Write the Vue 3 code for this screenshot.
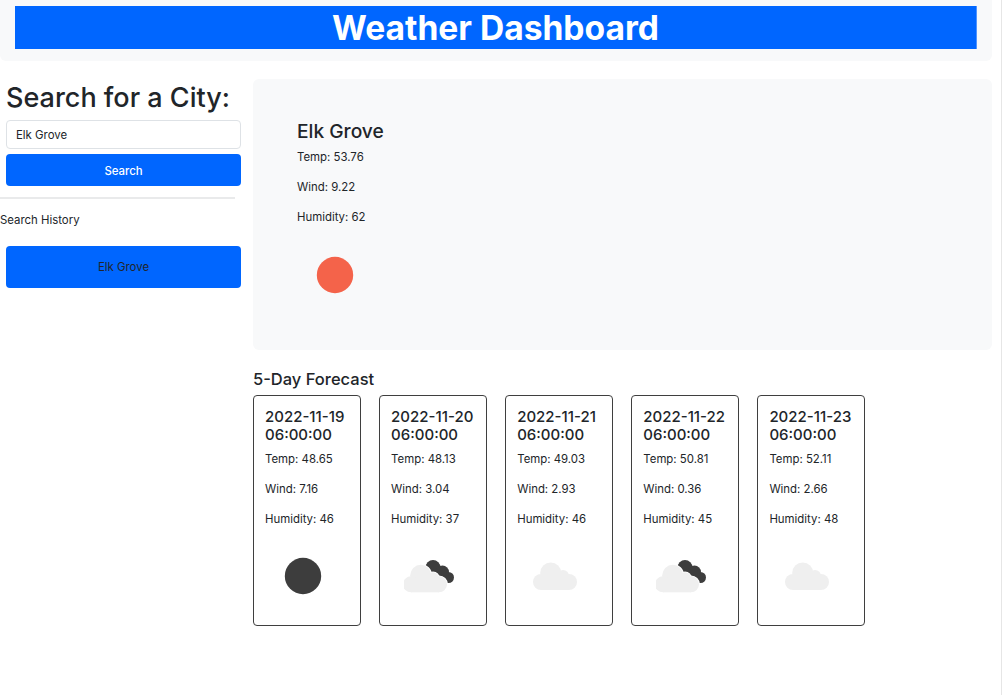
<script setup>
const today = { city: 'Elk Grove', temp: '53.76', wind: '9.22', humidity: '62' }

const days = [
  { date: '2022-11-19', temp: '48.65', wind: '7.16', humidity: '46', icon: 'moon' },
  { date: '2022-11-20', temp: '48.13', wind: '3.04', humidity: '37', icon: 'partly' },
  { date: '2022-11-21', temp: '49.03', wind: '2.93', humidity: '46', icon: 'cloud' },
  { date: '2022-11-22', temp: '50.81', wind: '0.36', humidity: '45', icon: 'partly' },
  { date: '2022-11-23', temp: '52.11', wind: '2.66', humidity: '48', icon: 'cloud' }
]

// same lobes for the plain cloud and the one in front of the dark cloud
const lobes = [
  { cx: 20.7, cy: 22, r: 10.5 },
  { cx: 33, cy: 25, r: 6 },
  { cx: 11, cy: 31, r: 8 },
  { cx: 39, cy: 31, r: 8 }
]
</script>

<template>
  <div class="page">
    <header class="top">
      <h1 class="title">Weather Dashboard</h1>
    </header>

    <div class="main">
      <aside class="side">
        <h2 class="side-title">Search for a City:</h2>
        <input class="city-input" type="text" value="Elk Grove" />
        <button class="btn search-btn">Search</button>
        <hr class="rule" />
        <p class="history-label">Search History</p>
        <button class="btn history-btn">Elk Grove</button>
      </aside>

      <section class="content">
        <div class="current">
          <h3 class="city">{{ today.city }}</h3>
          <p>Temp: {{ today.temp }}</p>
          <p>Wind: {{ today.wind }}</p>
          <p>Humidity: {{ today.humidity }}</p>
          <svg class="icon" viewBox="0 0 50 50" width="50" height="50">
            <circle cx="25" cy="25" r="18.2" fill="#f4634a" />
          </svg>
        </div>

        <h4 class="forecast-title">5-Day Forecast</h4>
        <div class="cards">
          <div v-for="day in days" :key="day.date" class="card">
            <h5 class="date">{{ day.date }} 06:00:00</h5>
            <p>Temp: {{ day.temp }}</p>
            <p>Wind: {{ day.wind }}</p>
            <p>Humidity: {{ day.humidity }}</p>
            <svg class="icon card-icon" viewBox="0 0 50 50" width="50" height="50">
              <circle v-if="day.icon === 'moon'" cx="25" cy="25" r="18.2" fill="#3d3d3d" />
              <g v-else-if="day.icon === 'partly'">
                <g fill="#3d3d3d">
                  <circle cx="29" cy="16.5" r="7.5" />
                  <circle cx="38.5" cy="21" r="6.5" />
                  <circle cx="44.5" cy="26.5" r="5.5" />
                  <rect x="28" y="18" width="16" height="12" />
                </g>
                <g transform="translate(-4 2.3)">
                  <g fill="#fff" stroke="#fff" stroke-width="1.8">
                    <circle v-for="l in lobes" :key="l.cx" :cx="l.cx" :cy="l.cy" :r="l.r" />
                    <rect x="11" y="26" width="28" height="13" />
                  </g>
                  <g fill="#efefef">
                    <circle v-for="l in lobes" :key="l.cx" :cx="l.cx" :cy="l.cy" :r="l.r" />
                    <rect x="11" y="26" width="28" height="13" />
                  </g>
                </g>
              </g>
              <g v-else fill="#efefef">
                <circle v-for="l in lobes" :key="l.cx" :cx="l.cx" :cy="l.cy" :r="l.r" />
                <rect x="11" y="26" width="28" height="13" />
              </g>
            </svg>
          </div>
        </div>
      </section>
    </div>
  </div>
</template>

<style>
body { background: #fff; }
</style>

<style scoped>
.page {
  box-sizing: border-box;
  width: 1002px;
  height: 695px;
  overflow: hidden;
  border-right: 1px solid #e6e6e6;
  font-family: Inter, "Liberation Sans", sans-serif;
  font-size: 11.4px;
  line-height: 1.5;
  color: #212529;
}
p { margin: 0 0 13px; }
.top {
  width: 992px;
  height: 61px;
  box-sizing: border-box;
  padding: 6px 15px 12px;
  background: #f8f9fa;
  border-radius: 0 0 6px 6px;
}
.title {
  margin: 0;
  height: 43px;
  background: #0066ff;
  border-right: 1px solid #4f94ff;
  box-sizing: border-box;
  color: #fff;
  font-size: 33.6px;
  font-weight: 700;
  line-height: 43px;
  text-align: center;
}
.main {
  display: flex;
  margin-top: 18px;
}
.side {
  width: 253px;
  flex-shrink: 0;
  box-sizing: border-box;
}
.side-title {
  margin: 0 0 4px 6px;
  font-size: 27px;
  font-weight: 500;
  line-height: 37px;
}
.city-input {
  display: block;
  box-sizing: border-box;
  width: 235px;
  height: 29px;
  margin: 4px 0 5px 6px;
  padding: 0 9px;
  border: 1px solid #dee2e6;
  border-radius: 4px;
  font: inherit;
  color: #212529;
}
.btn {
  display: block;
  width: 235px;
  margin-left: 6px;
  border: 0;
  border-radius: 4px;
  background: #0066ff;
  font: inherit;
}
.search-btn {
  height: 32px;
  padding-top: 4px;
  color: #fff;
  font-weight: 500;
}
.rule {
  width: 235px;
  height: 2px;
  margin: 11px 0 0;
  border: 0;
  background: #e9eaeb;
}
.history-label { margin: 13px 0 17px; }
.history-btn {
  height: 42px;
  color: #212529;
}
.content { width: 739px; }
.current {
  box-sizing: border-box;
  height: 271px;
  padding: 39px 44px;
  background: #f8f9fa;
  border-radius: 6px;
}
.city {
  margin: 0 0 5px;
  font-size: 19.2px;
  font-weight: 500;
  line-height: 26px;
}
.icon { display: block; margin: 0 0 0 13px; }
.current .icon { margin-top: 24px; }
.forecast-title {
  margin: 19px 0 6px;
  font-size: 16.5px;
  font-weight: 500;
  line-height: 20px;
}
.cards {
  display: flex;
  gap: 18.5px;
}
.card {
  box-sizing: border-box;
  width: 107.6px;
  height: 231px;
  padding: 12px 11px;
  border: 1px solid #3f3f3f;
  border-radius: 4px;
}
.date {
  margin: 0 0 7px;
  font-size: 15px;
  font-weight: 500;
  line-height: 18px;
}
.card-icon { margin: 23px 0 0 13px; }
</style>
